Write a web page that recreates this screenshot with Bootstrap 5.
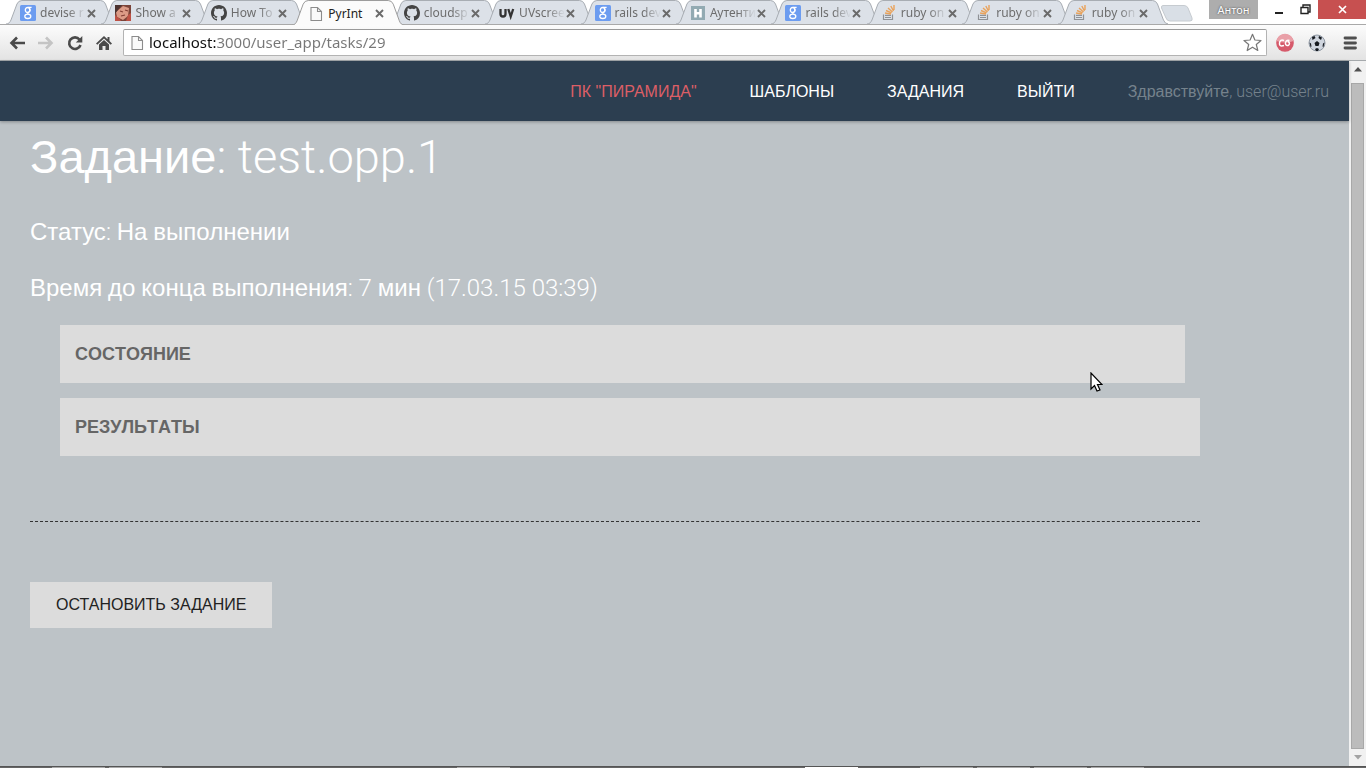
<!DOCTYPE html>
<html lang="ru">
<head>
<meta charset="utf-8">
<meta name="viewport" content="width=device-width, initial-scale=1">
<title>PyrInt</title>
<link href="https://cdn.jsdelivr.net/npm/bootstrap@5.3.0/dist/css/bootstrap.min.css" rel="stylesheet">
<style>
  body { font-family: "Liberation Sans", Arial, sans-serif; background: #bdc3c7; }
  .ui { font-family: "Noto Sans", "Open Sans", sans-serif; }
  button { border: 0; padding: 0; background: none; color: inherit; }

  /* tab strip */
  .strip { height: 25px; background: #fff; border-bottom: 1px solid #a9a9a9; padding-left: 6px; }
  .tabs { flex: 0 1 1147px; min-width: 0; }
  .tab { flex: 1 1 0; min-width: 0; height: 24px; padding: 2px 0 0 14px; }
  .tab .shape { position: absolute; left: 0; top: 0; width: calc(100% + 15px); height: 24px; fill: #dce1e8; stroke: #a8adb3; }
  .tab.current { z-index: 2; height: 25px; padding-left: 16px; }
  .tab.current .shape { height: 25px; fill: #fbfbfb; stroke: #9b9b9b; }
  .tab .fav, .tab .label, .tab button { position: relative; z-index: 1; }
  .tab .fav { width: 16px; height: 16px; flex: none; }
  .tab .label { flex: 0 0 47px; margin-left: 4px; white-space: nowrap; font-size: 12px; line-height: 20px; color: #6d6d6d; text-decoration: none;
    -webkit-mask-image: linear-gradient(90deg, #000 28px, transparent 46px); mask-image: linear-gradient(90deg, #000 28px, transparent 46px); }
  .tab.current .label { color: #222; -webkit-mask-image: none; mask-image: none; }
  .tab button { line-height: 0; }
  .newtab { margin: 5px 0 0 6px; line-height: 0; }
  .user-chip { width: 49px; height: 19px; background: #adadad; color: #fff; font-size: 11px; line-height: 18px; text-shadow: 0 0 2px #333; }
  .win { width: 26px; height: 19px; line-height: 0; }
  .win-close { width: 48px; background: #c75050; }

  /* toolbar */
  .toolbar { height: 36px; background: linear-gradient(#fcfcfc, #e3e3e3); border-bottom: 1px solid #a5a9ac; padding: 0 9px 0 5px; }
  .tool { width: 29px; line-height: 0; }
  .omnibox { height: 27px; background: #fff; border: 1px solid #b3b3b3; border-top-color: #999; border-radius: 2px; padding: 0 4px 0 5px; margin-left: 2px; }
  .omnibox input { border: 0; outline: 0; padding: 0 0 2px; height: 25px; font-size: 15px; color: transparent;
    background: linear-gradient(90deg, #111 0 67px, #777 67px); -webkit-background-clip: text; background-clip: text; }

  /* site */
  .viewport { flex: 1 1 auto; }
  .site { background: #bdc3c7; }
  .topnav { min-height: 60px; background: #2c3e50; box-shadow: 0 1px 3px rgba(0,0,0,.3); padding: 2px 20px 0; gap: 53px; font-size: 16px; }
  .topnav a { color: #fff; text-decoration: none; white-space: nowrap; }
  .topnav a.brand { color: #dd5e66; }
  .hello { color: #75828c; white-space: nowrap; }
  .thin { font-family: Roboto, sans-serif; font-weight: 300; }
  .task { max-width: 1200px; padding-left: 30px; color: #fff; }
  .task h1 { font-size: 47px; line-height: 56px; margin: 8px 0 0; font-weight: 400; }
  .task h4 { font-size: 24px; line-height: 26px; margin: 30px 0 0; font-weight: 400; }
  .task h1 + h4 { margin-top: 34px; }
  .sections { margin: 24px 0 0 30px; gap: 15px; }
  .section-head { height: 58px; padding: 0 15px; background: #dcdcdc; color: #666; font-size: 18px; font-weight: 700; text-align: left; font-kerning: none; }
  .section-head.inset-end { margin-right: 15px; }
  .divider { border: 0; border-top: 1px dashed #333; opacity: 1; margin: 65px 0 60px; }
  .stop { height: 46px; padding: 0 26px; background: #dcdcdc; color: #222; font-size: 16px; }
  .pointer { position: absolute; left: 1090px; top: 311px; }

  /* scrollbar and taskbar edge */
  .vscroll { flex: 0 0 17px; background: #f1f1f1; }
  .vscroll .arrow { height: 17px; flex: none; line-height: 0; }
  .vscroll .thumb { background: #bcbcbc; border: 1px solid #a8a8a8; margin: 5px 2px 0; }
  .taskbar { height: 2px; border-top: 1px solid #555; background: #666; padding: 0 222px 0 52px; }
  .taskbar span { height: 1px; background: #aaa; width: 53px; }
  .taskbar .group { margin-left: 58px; }
</style>
</head>
<body class="d-flex flex-column min-vh-100 overflow-hidden">

<svg class="d-none">
  <symbol id="shape" viewBox="0 0 111 24" preserveAspectRatio="none"><path d="M0 24C3 24 4 22 5 20L11 4Q12.500 .5 16 .5H95Q98.500 .5 100 4L106 20Q107.500 24 111 24" vector-effect="non-scaling-stroke"/></symbol>
  <symbol id="x" viewBox="0 0 9 9"><path d="M1 1l7 7M8 1l-7 7" stroke="#6a6a6a" stroke-width="1.900" fill="none"/></symbol>
  <symbol id="google" viewBox="0 0 16 16"><rect width="16" height="16" rx="1.500" fill="#6c9cf0"/><g fill="none" stroke="#fff" stroke-width="1.300"><ellipse cx="7.600" cy="5" rx="2.300" ry="2.500"/><path d="M8 2.300h3.600M9.300 3.500Q11 5.700 8.800 7Q7 8 8.300 8.900"/><ellipse cx="7.800" cy="11.300" rx="3" ry="2.200"/></g></symbol>
  <symbol id="github" viewBox="0 0 16 16"><path fill="#444" stroke="none" d="M8 0C3.580 0 0 3.580 0 8c0 3.540 2.290 6.530 5.470 7.590.4.070.55-.17.55-.38 0-.19-.01-.82-.01-1.490-2.010.37-2.530-.49-2.690-.94-.09-.23-.48-.94-.82-1.130-.28-.15-.68-.52-.01-.53.630-.01 1.080.58 1.230.82.720 1.210 1.870.87 2.330.66.070-.52.280-.87.510-1.070-1.780-.2-3.640-.89-3.640-3.950 0-.87.310-1.590.82-2.150-.08-.2-.36-1.020.08-2.120 0 0 .67-.21 2.200.82.640-.18 1.320-.27 2-.27s1.360.09 2 .27c1.530-1.040 2.200-.82 2.200-.82.440 1.100.160 1.920.08 2.120.510.56.820 1.270.82 2.150 0 3.070-1.870 3.750-3.650 3.950.290.25.540.73.540 1.480 0 1.070-.01 1.930-.01 2.200 0 .21.150.46.550.38A8 8 0 0 0 16 8c0-4.420-3.580-8-8-8z"/></symbol>
  <symbol id="doc" viewBox="0 0 16 16"><path d="M3 1.500h6.500L13.500 5.500V14.500H3zM9.500 1.500v4h4" fill="#fafafa" stroke="#8c8c8c" stroke-width="1.100"/></symbol>
  <symbol id="so" viewBox="0 0 16 16"><path d="M2.500 9.500v5h9v-5M4 12.500h6M4 10.300h6" fill="none" stroke="#8f9296" stroke-width="1.200"/><path d="M4 8l6 1M5 5.500l5.500 2.400M7 3l4.500 4M9.800 1l2.700 5M13 0v5" fill="none" stroke="#e9a35c" stroke-width="1.400"/></symbol>
  <symbol id="habr" viewBox="0 0 16 16"><rect x="1" y="1" width="14" height="14" fill="#92aab2"/><path d="M5.500 4v8.500M10.500 4v8.500M5 8.300h6" stroke="#fff" stroke-width="2.600" fill="none"/></symbol>
  <symbol id="photo" viewBox="0 0 16 16"><rect width="16" height="16" fill="#7b4439"/><path d="M1 7L8 1l6 2-1 8-5 4-6-3z" fill="#dc9b87"/><path d="M0 0h7L2 6 0 9z" fill="#4c3330"/><path d="M5 6l3 1M10 5l3 1M6 11l4-1" stroke="#803e35" stroke-width="1.200"/><path d="M0 10l5 4 1 2H0zM13 10l3-2v8h-5z" fill="#bd5145"/></symbol>
  <symbol id="uv" viewBox="0 0 16 16"><path d="M1.500 4v5Q1.500 11.500 4 11.500T6.500 9V4M9.300 4l2.400 7.500L14.200 4" fill="none" stroke="#333" stroke-width="2.300"/></symbol>
</svg>

<header class="ui">
  <div class="strip d-flex">
    <nav class="tabs d-flex" aria-label="Вкладки">
      <div class="tab position-relative d-flex align-items-center"><svg class="shape"><use href="#shape"/></svg><svg class="fav"><use href="#google"/></svg><a class="label" href="#">devise r</a><button aria-label="Закрыть"><svg width="9" height="9"><use href="#x"/></svg></button></div>
      <div class="tab position-relative d-flex align-items-center"><svg class="shape"><use href="#shape"/></svg><svg class="fav"><use href="#photo"/></svg><a class="label" href="#">Show a</a><button aria-label="Закрыть"><svg width="9" height="9"><use href="#x"/></svg></button></div>
      <div class="tab position-relative d-flex align-items-center"><svg class="shape"><use href="#shape"/></svg><svg class="fav"><use href="#github"/></svg><a class="label" href="#">How To</a><button aria-label="Закрыть"><svg width="9" height="9"><use href="#x"/></svg></button></div>
      <div class="tab current position-relative d-flex align-items-center"><svg class="shape"><use href="#shape"/></svg><svg class="fav"><use href="#doc"/></svg><a class="label" href="#">PyrInt</a><button aria-label="Закрыть"><svg width="9" height="9"><use href="#x"/></svg></button></div>
      <div class="tab position-relative d-flex align-items-center"><svg class="shape"><use href="#shape"/></svg><svg class="fav"><use href="#github"/></svg><a class="label" href="#">cloudsp</a><button aria-label="Закрыть"><svg width="9" height="9"><use href="#x"/></svg></button></div>
      <div class="tab position-relative d-flex align-items-center"><svg class="shape"><use href="#shape"/></svg><svg class="fav"><use href="#uv"/></svg><a class="label" href="#">UVscree</a><button aria-label="Закрыть"><svg width="9" height="9"><use href="#x"/></svg></button></div>
      <div class="tab position-relative d-flex align-items-center"><svg class="shape"><use href="#shape"/></svg><svg class="fav"><use href="#google"/></svg><a class="label" href="#">rails dev</a><button aria-label="Закрыть"><svg width="9" height="9"><use href="#x"/></svg></button></div>
      <div class="tab position-relative d-flex align-items-center"><svg class="shape"><use href="#shape"/></svg><svg class="fav"><use href="#habr"/></svg><a class="label" href="#">Аутенти</a><button aria-label="Закрыть"><svg width="9" height="9"><use href="#x"/></svg></button></div>
      <div class="tab position-relative d-flex align-items-center"><svg class="shape"><use href="#shape"/></svg><svg class="fav"><use href="#google"/></svg><a class="label" href="#">rails dev</a><button aria-label="Закрыть"><svg width="9" height="9"><use href="#x"/></svg></button></div>
      <div class="tab position-relative d-flex align-items-center"><svg class="shape"><use href="#shape"/></svg><svg class="fav"><use href="#so"/></svg><a class="label" href="#">ruby on</a><button aria-label="Закрыть"><svg width="9" height="9"><use href="#x"/></svg></button></div>
      <div class="tab position-relative d-flex align-items-center"><svg class="shape"><use href="#shape"/></svg><svg class="fav"><use href="#so"/></svg><a class="label" href="#">ruby on</a><button aria-label="Закрыть"><svg width="9" height="9"><use href="#x"/></svg></button></div>
      <div class="tab position-relative d-flex align-items-center"><svg class="shape"><use href="#shape"/></svg><svg class="fav"><use href="#so"/></svg><a class="label" href="#">ruby on</a><button aria-label="Закрыть"><svg width="9" height="9"><use href="#x"/></svg></button></div>
    </nav>
    <button class="newtab align-self-start" aria-label="Новая вкладка"><svg width="34" height="17"><path d="M4 .5H25Q28 .5 29 3l4 10q1 3-2 3H11q-3 0-4-3L2.500 3Q2 .5 4 .5z" fill="#d9dfe6" stroke="#c6cbd0"/></svg></button>
    <div class="d-flex ms-auto align-items-start flex-shrink-0">
      <button class="user-chip me-2">Антон</button>
      <button class="win" aria-label="Свернуть"><svg width="10" height="10"><path d="M1 7h8v2H1z" fill="#222"/></svg></button>
      <button class="win" aria-label="Развернуть"><svg width="11" height="11"><path d="M1 3.500h7v6H1zM3 3V1h7v7H8" fill="none" stroke="#222" stroke-width="1.400"/></svg></button>
      <button class="win win-close" aria-label="Закрыть окно"><svg width="9" height="9"><path d="M1 1l7 7M8 1l-7 7" stroke="#fff" stroke-width="1.700"/></svg></button>
    </div>
  </div>
  <div class="toolbar d-flex align-items-center">
    <button class="tool text-start ps-1" aria-label="Назад"><svg width="16" height="14"><path d="M8 1.500L2.500 7 8 12.500M3 7h13" fill="none" stroke="#4a4a4a" stroke-width="2.600"/></svg></button>
    <button class="tool text-start ps-1" aria-label="Вперёд"><svg width="16" height="14"><path d="M8 1.500L13.500 7 8 12.500M13 7H0" fill="none" stroke="#c4c4c4" stroke-width="2.600"/></svg></button>
    <button class="tool text-start ps-1" aria-label="Обновить"><svg width="16" height="16"><path d="M12.500 4.500A5.800 5.800 0 1 0 13.500 10" fill="none" stroke="#4a4a4a" stroke-width="2.600"/><path d="M15.300 1v6.500H8.800z" fill="#4a4a4a"/></svg></button>
    <button class="tool text-start ps-1" aria-label="Домой"><svg width="16" height="16"><path d="M8 1L0 8.500l1.300 1.200L8 3.500l6.700 6.200L16 8.500 13.500 6V2h-2v2.200z" fill="#4a4a4a"/><path d="M8 5L3 9.500V15h3.500v-4h3v4H13V9.500z" fill="#4a4a4a"/></svg></button>
    <div class="omnibox d-flex align-items-center flex-grow-1">
      <svg class="flex-shrink-0" width="16" height="16"><use href="#doc"/></svg>
      <input class="flex-grow-1 ms-1" type="text" aria-label="Адрес" value="localhost:3000/user_app/tasks/29">
      <button class="lh-1" aria-label="В закладки"><svg class="d-block" width="19" height="19" viewBox="0 0 19 19"><path d="M9.500 1.300l2.400 5.700 6.100.5-4.700 4 1.500 6-5.300-3.300-5.300 3.300 1.500-6-4.700-4 6.100-.5z" fill="#fff" stroke="#777" stroke-width="1.200" stroke-linejoin="round"/></svg></button>
    </div>
    <button class="lh-1 ms-2" aria-label="Last.fm"><svg class="d-block" width="20" height="20"><circle cx="10" cy="10" r="8.800" fill="#d65a6b"/><path d="M1.500 8A8.600 8.600 0 0 1 18.500 8Q10 11 1.500 8z" fill="#e9a0a8"/><path d="M9 7.500Q5 6 4.500 10T9 12.500M14.500 7.500Q11 6.300 10.500 10a2 2 0 1 0 2-1.500" fill="none" stroke="#fff" stroke-width="1.500"/></svg></button>
    <button class="lh-1 ms-2 ps-1" aria-label="Футбол"><svg class="d-block" width="20" height="20"><circle cx="10" cy="10" r="8" fill="#cfd5de" stroke="#8f98a3"/><path d="M10 8l2.500 2L11.500 13h-3L7.500 10zM5 4l2.500-1 1 2-3 2zM12 3l3 1.500-1 2.500-2.500-2zM2.500 9.500l1.500 1 .5 3-1 .5zM17.500 9.500l-1.500 1-.5 3 1 .5zM8 16l2-1 2 1-1 2H9z" fill="#15191f"/></svg></button>
    <button class="lh-1 ms-3" aria-label="Меню"><svg class="d-block" width="14" height="14"><path d="M2 2h10.500M2 7h10.500M2 12h10.500" stroke="#4f4f4f" stroke-width="2.800" stroke-linecap="round"/></svg></button>
  </div>
</header>

<div class="viewport d-flex">
  <div class="site flex-grow-1 position-relative">
    <nav class="topnav d-flex justify-content-end align-items-center">
      <a class="brand" href="#">ПК "ПИРАМИДА"</a>
      <a href="#">ШАБЛОНЫ</a>
      <a href="#">ЗАДАНИЯ</a>
      <a href="#">ВЫЙТИ</a>
      <span class="hello">Здравствуйте<span class="thin">, user@user.ru</span></span>
    </nav>
    <main class="task">
      <h1>Задание<span class="thin">: test.opp.1</span></h1>
      <h4>Статус<span class="thin">: </span>На<span class="thin"> </span>выполнении</h4>
      <h4>Время<span class="thin"> </span>до<span class="thin"> </span>конца<span class="thin"> </span>выполнения<span class="thin">: 7 </span>мин<span class="thin"> (17.03.15 03:39)</span></h4>
      <div class="sections d-flex flex-column">
        <button class="section-head inset-end">СОСТОЯНИЕ</button>
        <button class="section-head">РЕЗУЛЬТАТЫ</button>
      </div>
      <hr class="divider">
      <button class="stop">ОСТАНОВИТЬ ЗАДАНИЕ</button>
    </main>
    <svg class="pointer" width="13" height="21"><path d="M1 1v16l3.500-3.500L7 19l3-1-2.500-5.500H12z" fill="#fff" stroke="#000" stroke-width="1.200"/></svg>
  </div>
  <div class="vscroll d-flex flex-column" aria-hidden="true">
    <div class="arrow d-flex align-items-center justify-content-center"><svg width="8" height="5"><path d="M4 0l4 4.500H0z" fill="#505050"/></svg></div>
    <div class="thumb flex-grow-1"></div>
    <div class="arrow d-flex align-items-center justify-content-center"><svg width="8" height="5"><path d="M0 0h8L4 4.500z" fill="#a3a3a3"/></svg></div>
  </div>
</div>
<div class="taskbar d-flex gap-1" aria-hidden="true"><span></span><span></span><span class="ms-auto"></span><span class="ms-auto bg-white"></span><span class="group"></span><span></span><span></span><span></span></div>
<script src="https://cdn.jsdelivr.net/npm/bootstrap@5.3.0/dist/js/bootstrap.bundle.min.js"></script>
</body>
</html>
